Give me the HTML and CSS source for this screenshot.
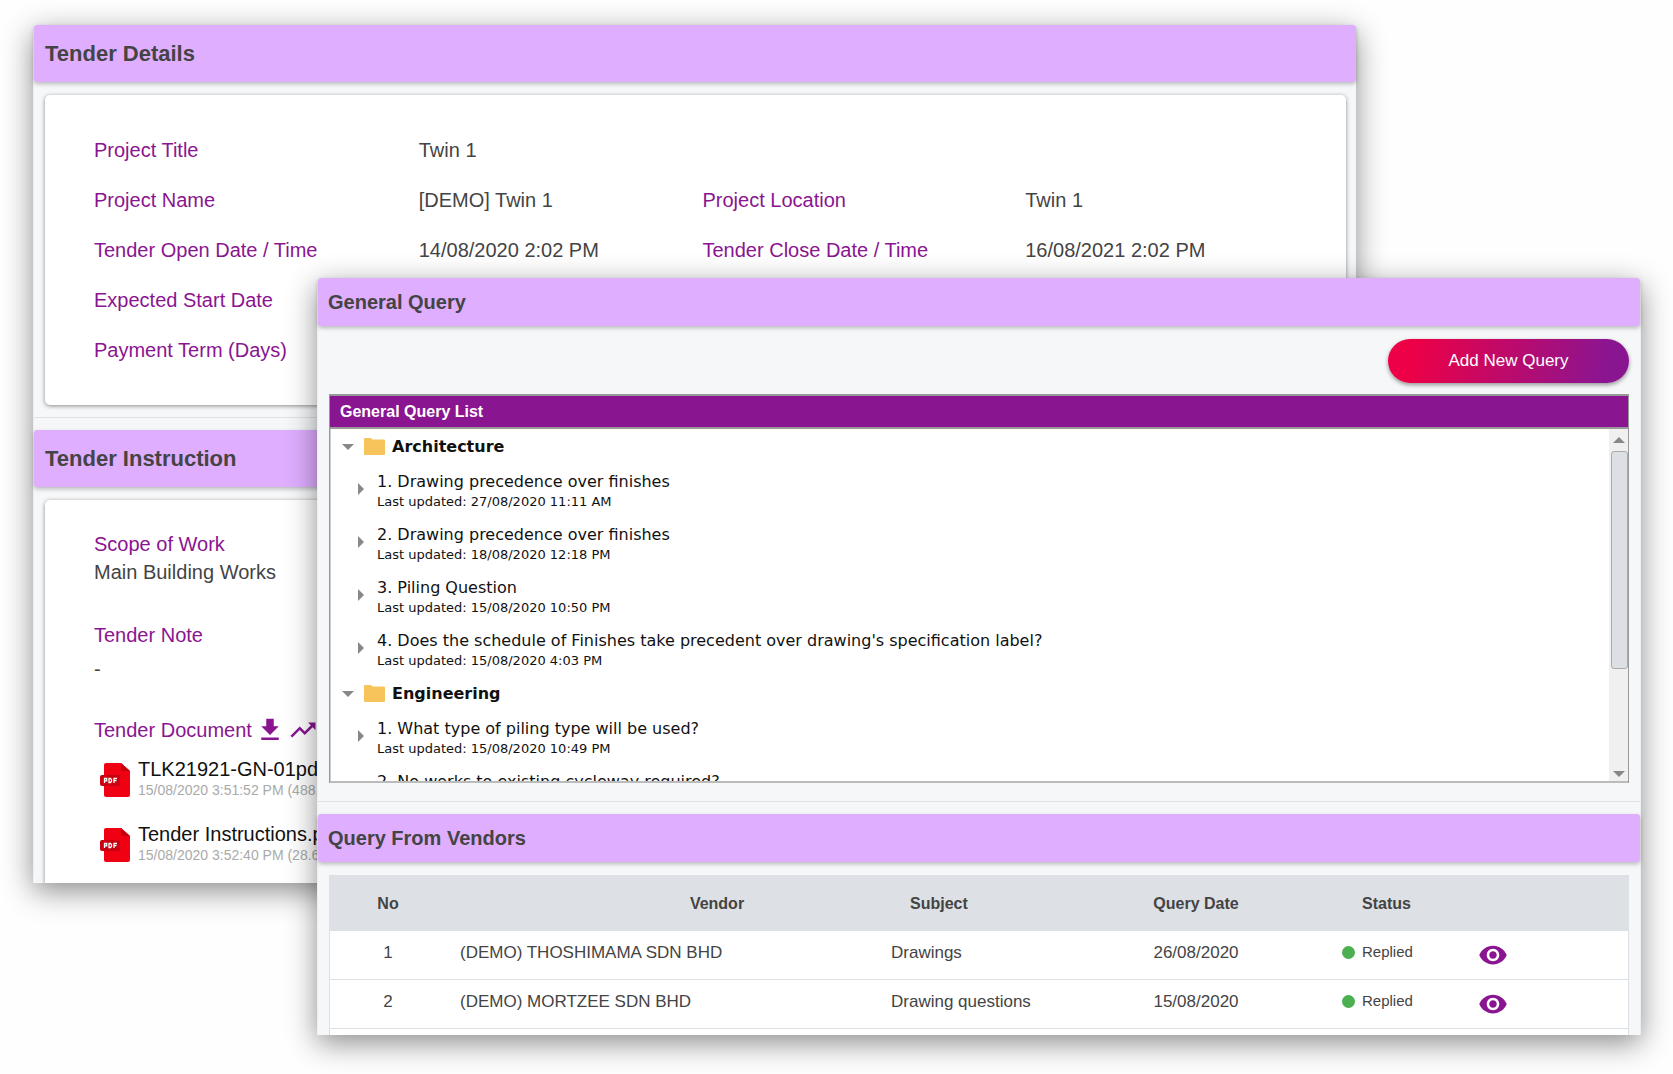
FILE: index.html
```html
<!DOCTYPE html>
<html lang="en">
<head>
<meta charset="utf-8">
<title>Tender Details</title>
<link rel="stylesheet" href="styles.css">
</head>
<body>
<svg class="sprite" aria-hidden="true">
  <symbol id="eye" viewBox="0 0 24 24"><path d="M12 4.500C7 4.500 2.730 7.610 1 12c1.730 4.390 6 7.500 11 7.500s9.270-3.110 11-7.500c-1.730-4.390-6-7.500-11-7.500zM12 17c-2.760 0-5-2.240-5-5s2.240-5 5-5 5 2.240 5 5-2.240 5-5 5zm0-8c-1.660 0-3 1.340-3 3s1.340 3 3 3 3-1.340 3-3-1.340-3-3-3z"/></symbol>
  <symbol id="folder" viewBox="0 0 21 17"><path d="M0 1Q0 0 1 0H7l1.500 1.500h11.500Q21 1.500 21 2.500V16Q21 17 20 17H1Q0 17 0 16z"/></symbol>
  <symbol id="pdf" viewBox="0 0 30 34">
    <path fill="#ef0012" d="M6 0h15l9 8v24q0 2-2 2H6q-2 0-2-2V2q0-2 2-2z"/>
    <path fill="#c4000f" d="M21 0l9 8h-7q-2 0-2-2z"/>
    <rect fill="#c8000f" y="12" width="20" height="11" rx="2"/>
    <path fill="none" stroke="#fff" stroke-width="1.300" d="M4.500 20v-4.500h2.200v2.300H4.500M9 15.500v4h1.500l1-1v-2l-1-1zM14 20v-4.500h3M14 17.700h2.500"/>
  </symbol>
</svg>
<main class="stage">
  <article class="panel panel-tender">
    <section class="block">
      <h2 class="bar bar-large">Tender Details</h2>
      <div class="card">
        <dl class="details">
          <dt>Project Title</dt><dd class="wide">Twin 1</dd>
          <dt>Project Name</dt><dd>[DEMO] Twin 1</dd>
          <dt>Project Location</dt><dd>Twin 1</dd>
          <dt>Tender Open Date / Time</dt><dd>14/08/2020 2:02 PM</dd>
          <dt>Tender Close Date / Time</dt><dd>16/08/2021 2:02 PM</dd>
          <dt>Expected Start Date</dt><dd class="wide"></dd>
          <dt>Payment Term (Days)</dt><dd class="wide"></dd>
        </dl>
      </div>
    </section>
    <section class="block block-open">
      <h2 class="bar bar-large">Tender Instruction</h2>
      <div class="card card-open">
        <div class="note">
          <h3>Scope of Work</h3>
          <p>Main Building Works</p>
        </div>
        <div class="note note-spaced">
          <h3>Tender Note</h3>
          <p>-</p>
        </div>
        <div class="documents">
          <h3>Tender Document</h3>
          <button class="icon-button" type="button" aria-label="Download all"><svg viewBox="0 0 24 24"><path d="M19 9h-4V3H9v6H5l7 7 7-7zM5 18v2h14v-2H5z"/></svg></button>
          <button class="icon-button" type="button" aria-label="Activity"><svg viewBox="0 0 24 24"><path d="M16 6l2.290 2.290-4.880 4.880-4-4L2 16.590 3.410 18l6-6 4 4 6.300-6.290L22 12V6z"/></svg></button>
        </div>
        <ul class="files">
          <li><svg class="pdf"><use href="#pdf"/></svg><div><a href="#">TLK21921-GN-01pdf</a><small>15/08/2020 3:51:52 PM (488.</small></div></li>
          <li><svg class="pdf"><use href="#pdf"/></svg><div><a href="#">Tender Instructions.pdf</a><small>15/08/2020 3:52:40 PM (28.6</small></div></li>
        </ul>
      </div>
    </section>
  </article>

  <article class="panel panel-query">
    <section class="block">
      <h2 class="bar">General Query</h2>
      <div class="toolbar"><button class="add" type="button">Add New Query</button></div>
      <div class="list">
        <h3 class="list-title">General Query List</h3>
        <div class="list-body">
          <div class="tree">
            <h4><i class="open"></i><svg class="folder"><use href="#folder"/></svg>Architecture</h4>
            <ul>
              <li><i class="closed"></i><div><p>1. Drawing precedence over finishes</p><small>Last updated: 27/08/2020 11:11 AM</small></div></li>
              <li><i class="closed"></i><div><p>2. Drawing precedence over finishes</p><small>Last updated: 18/08/2020 12:18 PM</small></div></li>
              <li><i class="closed"></i><div><p>3. Piling Question</p><small>Last updated: 15/08/2020 10:50 PM</small></div></li>
              <li><i class="closed"></i><div><p>4. Does the schedule of Finishes take precedent over drawing's specification label?</p><small>Last updated: 15/08/2020 4:03 PM</small></div></li>
            </ul>
            <h4><i class="open"></i><svg class="folder"><use href="#folder"/></svg>Engineering</h4>
            <ul>
              <li><i class="closed"></i><div><p>1. What type of piling type will be used?</p><small>Last updated: 15/08/2020 10:49 PM</small></div></li>
              <li><div class="no-arrow"><p>2. No works to existing cycleway required?</p></div></li>
            </ul>
          </div>
          <div class="scroll"><i class="up"></i><div class="thumb"></div><i class="down"></i></div>
        </div>
      </div>
    </section>
    <section class="block block-open">
      <h2 class="bar">Query From Vendors</h2>
      <div class="table-wrap">
        <table>
          <colgroup><col class="c-no"><col><col class="c-subject"><col class="c-date"><col class="c-status"><col class="c-view"></colgroup>
          <thead>
            <tr><th class="center">No</th><th class="h-vendor">Vendor</th><th class="h-subject">Subject</th><th class="center">Query Date</th><th class="h-status">Status</th><th></th></tr>
          </thead>
          <tbody>
            <tr><td class="center">1</td><td>(DEMO) THOSHIMAMA SDN BHD</td><td>Drawings</td><td class="center">26/08/2020</td><td class="status"><span>Replied</span></td><td class="view"><button class="icon-button" type="button" aria-label="View query 1"><svg><use href="#eye"/></svg></button></td></tr>
            <tr><td class="center">2</td><td>(DEMO) MORTZEE SDN BHD</td><td>Drawing questions</td><td class="center">15/08/2020</td><td class="status"><span>Replied</span></td><td class="view"><button class="icon-button" type="button" aria-label="View query 2"><svg><use href="#eye"/></svg></button></td></tr>
          </tbody>
        </table>
      </div>
    </section>
  </article>
</main>
</body>
</html>
```
FILE: styles.css
```css
* { box-sizing: border-box; margin: 0; padding: 0; }

body {
  background: #fefefe;
  color: #444;
  font: 20px/28px "Liberation Sans", Arial, sans-serif;
}

ul { list-style: none; }
small { display: block; }
.sprite { display: none; }

/* Two overlapping panels share one grid cell */
.stage { display: grid; align-items: start; }

.panel {
  grid-area: 1 / 1;
  min-width: 0;
  border: 1px solid #eceef2;
  border-width: 0 1px;
  background: #f6f7f9;
  box-shadow: 0 8px 28px rgba(0, 0, 0, .45);
}
.panel-tender { margin: 25px 317px 0 33px; border-right: 0; }
.panel-query { margin: 278px 32px 40px 317px; z-index: 1; }

.block {
  padding-bottom: 12px;
  border-bottom: 1px solid #dfe1e5;
}
.panel-query .block { padding-bottom: 18px; }
.panel .block-open { padding: 12px 0 0; border: 0; }

.bar {
  display: flex;
  align-items: center;
  height: 48px;
  padding: 0 10px;
  border-radius: 3px;
  background: #dfaeff;
  box-shadow: 0 2px 4px rgba(0, 0, 0, .25);
  font-size: 20px;
}
.bar-large { height: 57px; padding: 0 11px; font-size: 22px; }

.card {
  margin: 13px 10px 0 11px;
  padding: 30px 0 30px 49px;
  border-radius: 5px;
  background: #fff;
  box-shadow: 0 1px 4px rgba(0, 0, 0, .45);
}
.card-open { padding-bottom: 19px; border-radius: 5px 5px 0 0; clip-path: inset(-4px -4px 0 -4px); }

.details {
  display: grid;
  grid-template-columns: 325fr 284fr 323fr 321fr;
  grid-auto-rows: 50px;
  align-items: center;
}
.wide { grid-column: 2 / -1; }
dt, .card h3 { color: #8a1591; font-size: 20px; font-weight: 400; }

.note-spaced { margin: 35px 0 32px; }
.note-spaced p { margin-top: 6px; }

.documents { display: flex; align-items: center; gap: 3px; height: 30px; }
.icon-button { display: block; height: 30px; border: 0; background: none; }
.icon-button svg { display: block; width: 30px; height: 30px; fill: #8a1591; }

.files { display: flex; flex-direction: column; gap: 23px; margin-top: 12px; }
.files li { display: flex; align-items: flex-end; gap: 8px; padding-left: 6px; white-space: nowrap; }
.files a { display: block; color: #111; line-height: 24px; text-decoration: none; }
.files small { color: #aaa; font-size: 14px; line-height: 18px; }
.pdf { width: 30px; height: 34px; margin-bottom: 2px; }

.toolbar { display: flex; justify-content: flex-end; padding: 13px 11px 11px; }
.add {
  width: 241px;
  height: 44px;
  border: 0;
  border-radius: 22px;
  background: linear-gradient(100deg, #ee0046 10%, #8a1591 90%);
  box-shadow: 0 2px 4px rgba(0, 0, 0, .4);
  color: #fff;
  font: 17px/20px "Liberation Sans", Arial, sans-serif;
}

.list { margin: 0 11px; border: 1px solid #999; border-width: 2px 1px 0; }
.list-title {
  padding: 0 10px;
  border-bottom: 2px solid #999;
  background: #8a1591;
  color: #fff;
  font-size: 16px;
  line-height: 31px;
}
.list-body {
  display: flex;
  height: 354px;
  overflow: hidden;
  border-bottom: 2px solid #bbb;
  border-left: 1px solid #ccc;
  background: #fff;
  color: #111;
  font: 16px/20px "DejaVu Sans", Verdana, sans-serif;
}
.tree { flex: 1; min-width: 0; }
.tree h4 { display: flex; align-items: center; height: 35px; padding-left: 11px; font-size: 16px; }
.tree li { display: flex; height: 53px; padding: 8px 0 5px 27px; gap: 13px; }
.tree li i { margin-top: 11px; }
.tree small { font-size: 13px; }
.no-arrow { margin-left: 19px; }
.folder { width: 21px; height: 17px; margin: 0 7px 0 10px; fill: #f7c45c; }
.open, .down { border: 6px solid transparent; border-top-color: #888; border-bottom: 0; }
.closed { height: 12px; border: 6px solid transparent; border-left-color: #888; border-right: 0; }
.up { border: 6px solid transparent; border-bottom-color: #888; border-top: 0; }

.scroll {
  display: flex;
  flex-direction: column;
  align-items: center;
  width: 19px;
  padding: 8px 0 4px;
  background: #f0f0f0;
}
.thumb {
  width: 17px;
  height: 218px;
  margin: 8px 0 auto 2px;
  border: 1px solid #aaa;
  border-radius: 3px;
  background: #dce0e5;
}

.table-wrap { margin: 13px 11px 0; padding-bottom: 6px; border: 1px solid #dde0e5; border-width: 0 1px; background: #fff; }
table { width: 100%; border-collapse: separate; border-spacing: 0; table-layout: fixed; font-size: 17px; line-height: 20px; }
th { height: 56px; padding-top: 2px; background: #dde0e5; font-size: 16px; text-align: left; }
td { height: 49px; padding: 0 14px 4px; border-bottom: 1px solid #dde0e5; }
.center { text-align: center; }
td.center { padding: 0 0 4px; }
.h-vendor { padding-left: 111px; text-align: center; }
.h-subject { padding-left: 33px; }
.h-status { padding-left: 91px; }
.c-no { width: 116px; }
.c-subject { width: 244px; }
.c-date { width: 150px; }
.c-status { width: 172px; }
.c-view { width: 185px; }
.status { padding: 0 0 6px 71px; font-size: 15px; }
.status span { display: flex; align-items: center; gap: 7px; }
.status span::before { content: ""; width: 13px; height: 13px; border-radius: 50%; background: #4caf50; }
.view { padding: 0 0 0 35px; }
```
